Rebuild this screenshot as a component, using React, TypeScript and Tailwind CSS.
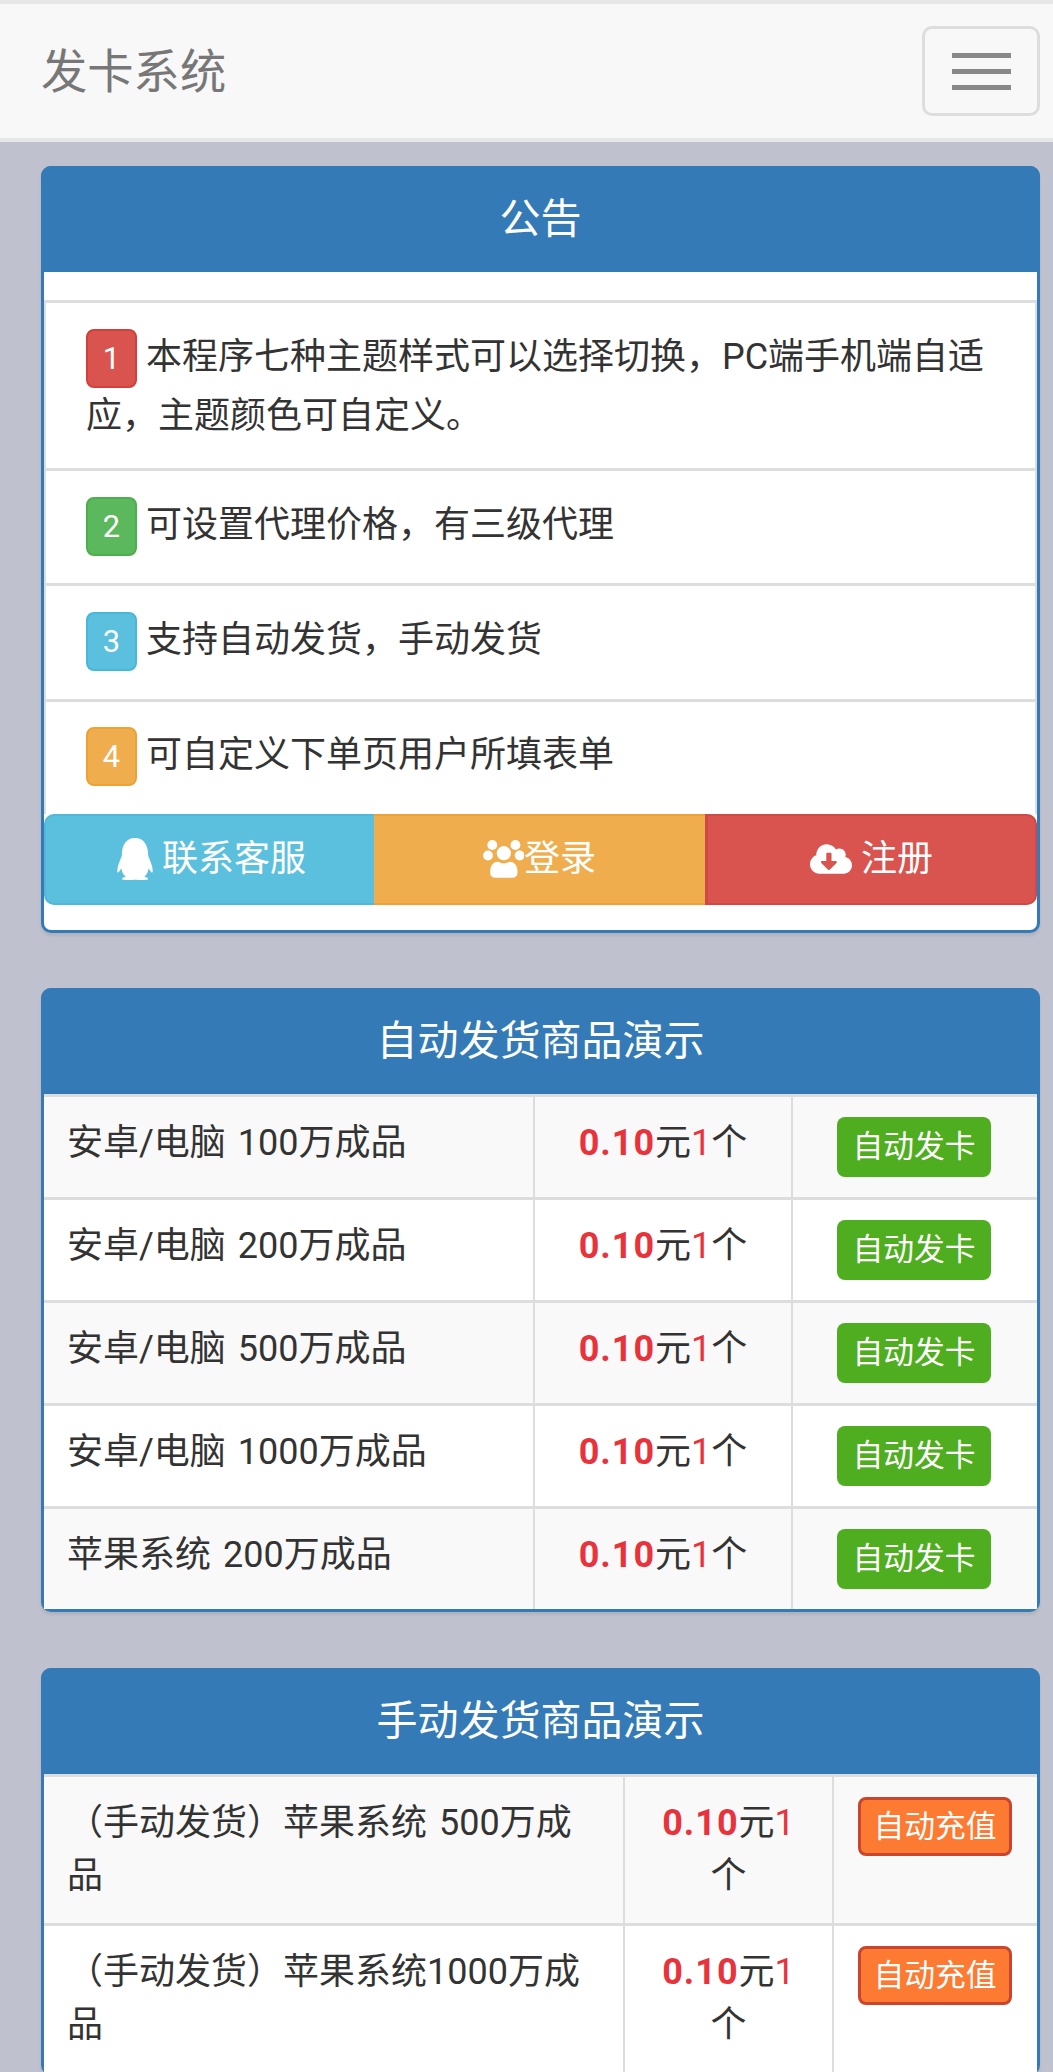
import { FaCloudDownloadAlt, FaQq } from "react-icons/fa";

const NOTICES = [
  { n: "1", color: "bg-[#d9534f] border-[#d43f3a]", text: "本程序七种主题样式可以选择切换，PC端手机端自适应，主题颜色可自定义。" },
  { n: "2", color: "bg-[#5cb85c] border-[#4cae4c]", text: "可设置代理价格，有三级代理" },
  { n: "3", color: "bg-[#5bc0de] border-[#46b8da]", text: "支持自动发货，手动发货" },
  { n: "4", color: "bg-[#f0ad4e] border-[#eea236]", text: "可自定义下单页用户所填表单" },
];

const AUTO_ITEMS = ["安卓/电脑 100万成品", "安卓/电脑 200万成品", "安卓/电脑 500万成品", "安卓/电脑 1000万成品", "苹果系统 200万成品"];
const MANUAL_ITEMS = ["（手动发货）苹果系统 500万成品", "（手动发货）苹果系统1000万成品"];

function Panel({ title, children, className = "" }: { title: string; children: React.ReactNode; className?: string }) {
  return (
    <section className={`ml-[41px] mr-[13px] rounded-[10px] border-[3px] border-[#337ab7] bg-white shadow-[0_3px_3px_rgba(0,0,0,0.08)] ${className}`}>
      <h2 className="-mx-[3px] -mt-[3px] flex h-[106px] items-center justify-center rounded-t-[10px] bg-[#337ab7] pt-[2px] text-[41px] font-normal text-white">
        {title}
      </h2>
      {children}
    </section>
  );
}

function Price() {
  return (
    <>
      <b className="font-bold tracking-[1px] text-[#e8323c]">0.10</b>元<span className="text-[#e8323c]">1</span>个
    </>
  );
}

// font awesome 4 style "users" glyph, the fa5 one in react-icons is much flatter
function UsersIcon() {
  return (
    <svg viewBox="38 25 122 115" width="41" height="38" className="shrink-0">
      <g fill="#fff">
        <circle cx="65" cy="40" r="15" />
        <circle cx="135" cy="40" r="15" />
        <circle cx="52" cy="72" r="15" />
        <circle cx="148" cy="72" r="15" />
      </g>
      <g fill="#fff" stroke="#f0ad4e" strokeWidth="5">
        <circle cx="100" cy="65" r="24" />
        <path d="M56 122C56 95 73 86 85 89C95 95 105 95 115 89C127 86 144 95 144 122Q144 142 125 142L75 142Q56 142 56 122Z" />
      </g>
    </svg>
  );
}

export default function App() {
  return (
    <div className="h-[2072px] overflow-hidden bg-[#bfc2ce] font-['Roboto','Noto_Sans_CJK_SC',sans-serif] text-[36px] text-[#333]">
      <nav className="flex h-[142px] items-center justify-between border-t-[4px] border-b-[4px] border-[#e7e7e7] bg-[#f8f8f8] pl-[41px] pr-[13px]">
        <span className="pt-[3px] text-[46.3px] text-[#777]">发卡系统</span>
        <button className="flex h-[90px] w-[118px] flex-col items-center justify-center gap-[11px] rounded-[10px] border-[3px] border-[#ddd]">
          <span className="h-[5px] w-[59px] bg-[#888]" />
          <span className="h-[5px] w-[59px] bg-[#888]" />
          <span className="h-[5px] w-[59px] bg-[#888]" />
        </button>
      </nav>

      <Panel title="公告" className="mt-[24px] h-[767px]">
        <ul className="mt-[28px]">
          {NOTICES.map((item) => (
            <li key={item.n} className="border-x-[2px] border-t-[3px] border-[#ddd] px-[40px] py-[25.6px] leading-[53px]">
              <span className={`mb-[2px] inline-block h-[59px] w-[51px] rounded-[8px] border-[2px] text-center text-[30.8px] leading-[55px] text-white ${item.color}`}>
                {item.n}
              </span>{" "}
              {item.text}
            </li>
          ))}
        </ul>
        <div className="flex h-[91px] text-white">
          <a className="flex w-[330px] items-center justify-center gap-[6px] rounded-l-[10px] border-y-[2px] border-l-[2px] border-[#4fb9d8] bg-[#5bc0de]">
            <FaQq className="text-[42px]" />
            联系客服
          </a>
          <a className="flex w-[331px] items-center justify-center border-y-[2px] border-[#eea236] bg-[#f0ad4e]">
            <UsersIcon />
            登录
          </a>
          <a className="flex flex-1 items-center justify-center gap-[9px] rounded-r-[10px] border-y-[2px] border-r-[2px] border-l-[3px] border-[#cf4a46] bg-[#d9534f]">
            <FaCloudDownloadAlt className="text-[42px]" />
            注册
          </a>
        </div>
      </Panel>

      <Panel title="自动发货商品演示" className="mt-[55px]">
        <table className="w-full table-fixed border-collapse">
          <colgroup>
            <col className="w-[490px]" />
            <col className="w-[258px]" />
            <col />
          </colgroup>
          <tbody>
            {AUTO_ITEMS.map((name, i) => (
              <tr key={name} className={i % 2 === 0 ? "bg-[#f9f9f9]" : "bg-white"}>
                <td className="border-t-[3px] border-r-[2px] border-[#ddd] py-[20px] pl-[23px] pr-[10px] align-top leading-[53px] [word-spacing:3px]">{name}</td>
                <td className="border-t-[3px] border-r-[2px] border-[#ddd] py-[20px] text-center align-top leading-[53px]">
                  <Price />
                </td>
                <td className="border-t-[3px] border-[#ddd] py-[20px] pr-[2px] text-center align-top">
                  <button className="inline-block h-[60px] w-[154px] rounded-[8px] bg-[#4fae1f] align-top text-[30.8px] text-white">自动发卡</button>
                </td>
              </tr>
            ))}
          </tbody>
        </table>
      </Panel>

      <Panel title="手动发货商品演示" className="mt-[56px]">
        <table className="w-full table-fixed border-collapse">
          <colgroup>
            <col className="w-[580px]" />
            <col className="w-[209px]" />
            <col />
          </colgroup>
          <tbody>
            {MANUAL_ITEMS.map((name, i) => (
              <tr key={name} className={i % 2 === 0 ? "bg-[#f9f9f9]" : "bg-white"}>
                <td className="border-t-[3px] border-r-[2px] border-[#ddd] py-[20px] pl-[23px] pr-[20px] align-top leading-[53px] [word-spacing:3px]">{name}</td>
                <td className="border-t-[3px] border-r-[2px] border-[#ddd] px-[24px] py-[20px] text-center align-top leading-[53px]">
                  <Price />
                </td>
                <td className="border-t-[3px] border-[#ddd] py-[20px] pr-[1px] text-center align-top">
                  <button className="inline-block h-[59px] w-[154px] rounded-[8px] border-[3px] border-[#c9452d] bg-[#fd7a33] align-top text-[30.8px] leading-[50px] text-white">自动充值</button>
                </td>
              </tr>
            ))}
          </tbody>
        </table>
      </Panel>
    </div>
  );
}
